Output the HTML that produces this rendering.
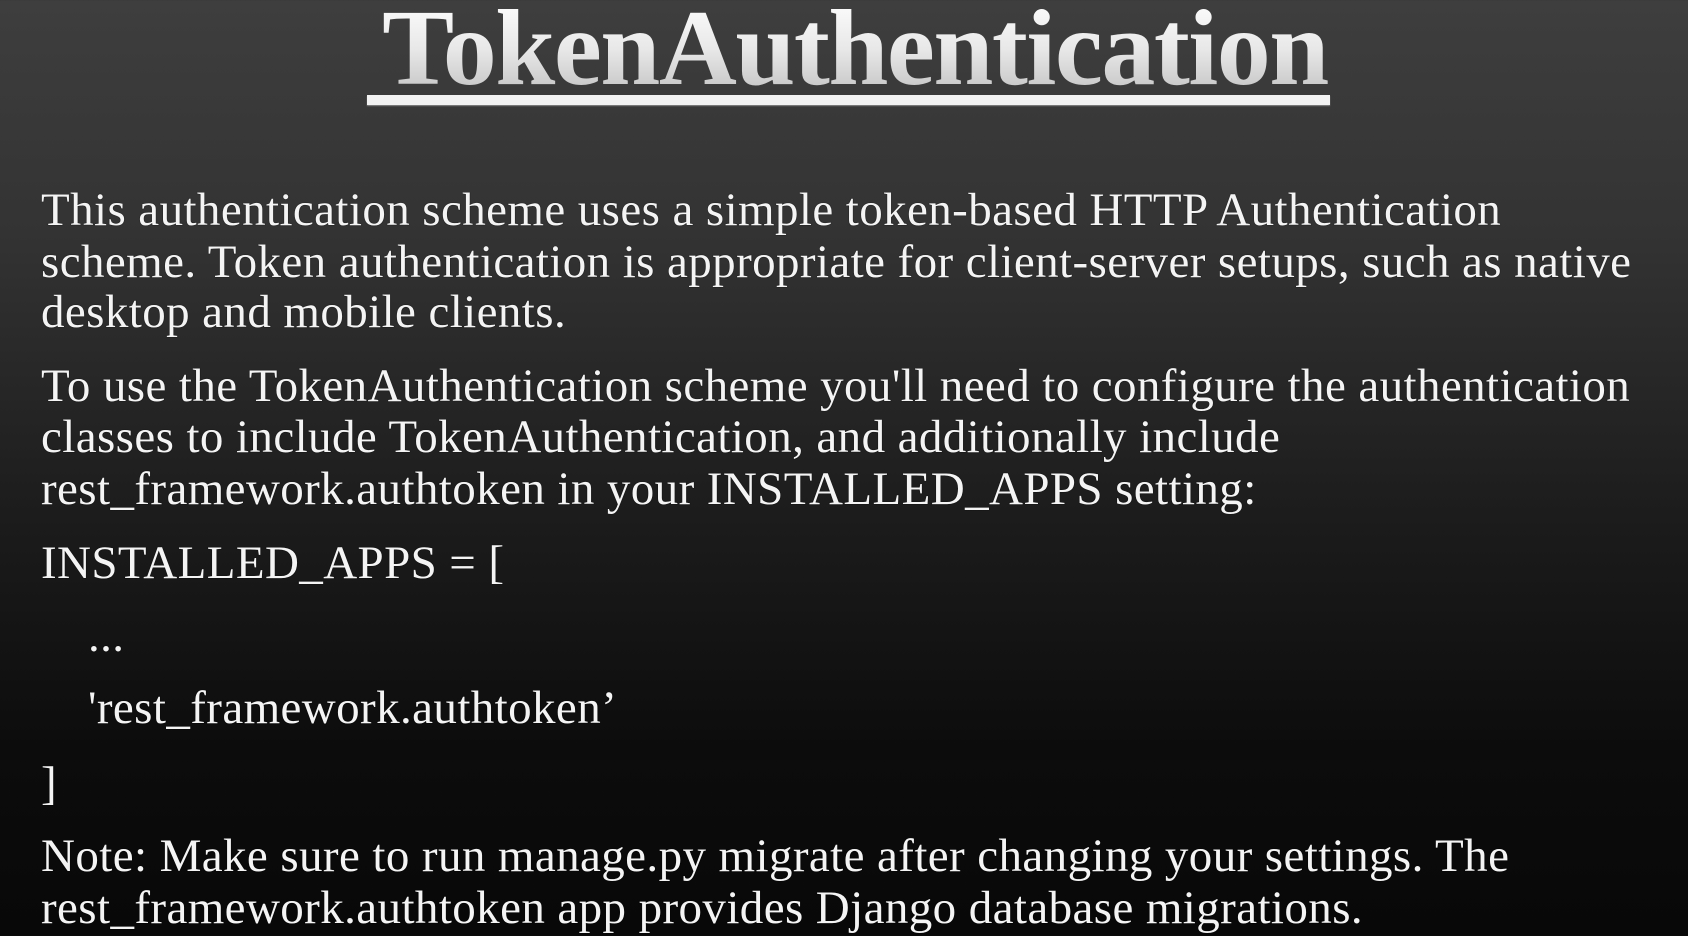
<!DOCTYPE html>
<html><head><meta charset="utf-8"><style>
html,body{margin:0;padding:0;}
body{width:1688px;height:936px;overflow:hidden;position:relative;
background:linear-gradient(180deg,#3e3e3e 0%,#333 25%,#1c1c1c 55%,#0c0c0c 80%,#080808 100%);
font-family:"Liberation Serif",serif;color:#f4f4f4;}
.t{position:absolute;left:11px;top:-5px;width:1688px;text-align:center;font-weight:bold;font-size:108px;line-height:108px;letter-spacing:-1.5px;
background:linear-gradient(180deg,#fff 0%,#e8e8e8 50%,#bdbdbd 100%);-webkit-background-clip:text;background-clip:text;color:transparent;}
.u{position:absolute;left:367px;top:95px;width:963px;height:10px;background:#f2f2f2;box-shadow:0 1px 1px #888;}
.l{position:absolute;left:41px;font-size:47px;line-height:47px;white-space:nowrap;letter-spacing:0.4px;text-shadow:0 0 1px #000;}
</style></head><body>
<div class="t">TokenAuthentication</div>
<div class="u"></div>
<div class="l" style="top:187px">This authentication scheme uses a simple token-based HTTP Authentication</div>
<div class="l" style="top:239px">scheme. Token authentication is appropriate for client-server setups, such as native</div>
<div class="l" style="top:289px">desktop and mobile clients.</div>
<div class="l" style="top:363px">To use the TokenAuthentication scheme you'll need to configure the authentication</div>
<div class="l" style="top:414px">classes to include TokenAuthentication, and additionally include</div>
<div class="l" style="top:466px">rest_framework.authtoken in your INSTALLED_APPS setting:</div>
<div class="l" style="top:540px">INSTALLED_APPS = [</div>
<div class="l" style="top:613px;left:88px">...</div>
<div class="l" style="top:685px;left:88px">'rest_framework.authtoken’</div>
<div class="l" style="top:761px">]</div>
<div class="l" style="top:833px">Note: Make sure to run manage.py migrate after changing your settings. The</div>
<div class="l" style="top:885px">rest_framework.authtoken app provides Django database migrations.</div>
</body></html>
